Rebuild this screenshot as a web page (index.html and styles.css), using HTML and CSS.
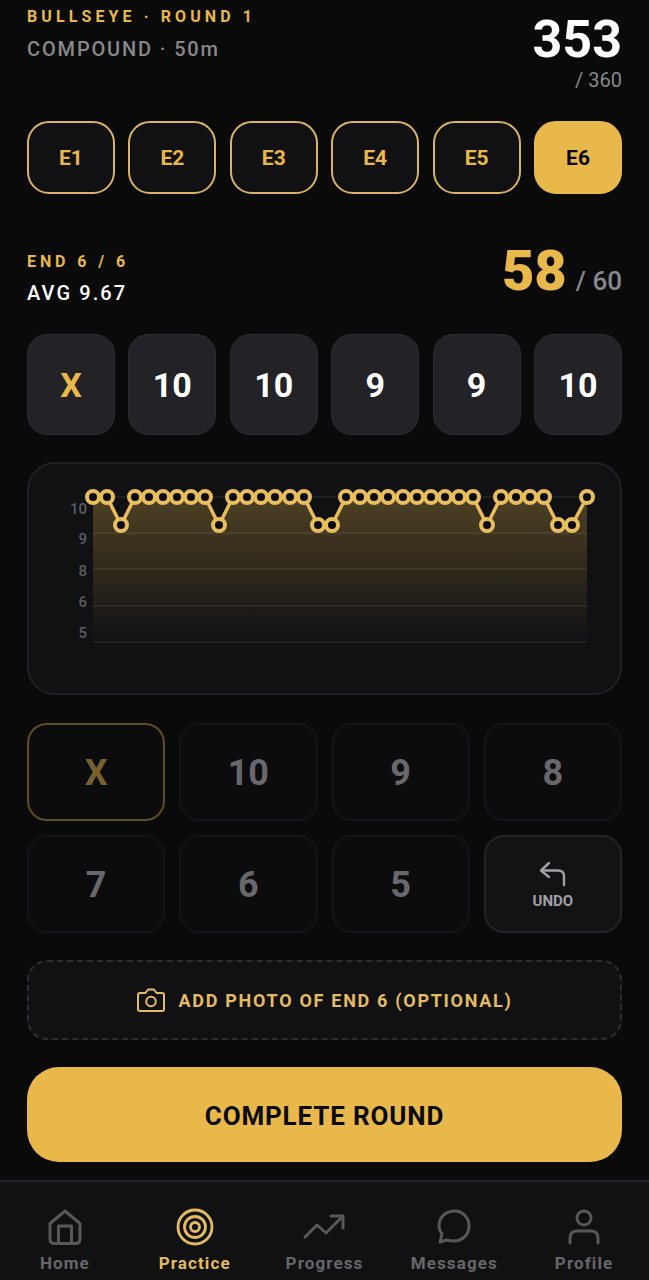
FILE: index.html
```html
<!DOCTYPE html>
<html lang="en">
<head>
  <meta charset="UTF-8">
  <meta name="viewport" content="width=device-width, initial-scale=1.0">
  <title>Bullseye - Round 1</title>
  <link rel="stylesheet" href="styles.css">
</head>
<body>
  <main class="content">
    <header class="round-header">
      <div>
        <div class="round-title">BULLSEYE · ROUND 1</div>
        <div class="round-sub">COMPOUND · 50m</div>
      </div>
      <div class="round-score">
        <div class="round-total">353</div>
        <div class="round-max">/ 360</div>
      </div>
    </header>

    <div class="six-grid end-tabs">
      <button class="end-tab">E1</button>
      <button class="end-tab">E2</button>
      <button class="end-tab">E3</button>
      <button class="end-tab">E4</button>
      <button class="end-tab">E5</button>
      <button class="end-tab active">E6</button>
    </div>

    <div class="end-summary">
      <div>
        <div class="end-label">END 6 / 6</div>
        <div class="end-avg">AVG 9.67</div>
      </div>
      <div class="end-score"><span class="end-total">58</span><span class="end-max">/ 60</span></div>
    </div>

    <div class="six-grid arrows">
      <div class="arrow-card gold">X</div>
      <div class="arrow-card">10</div>
      <div class="arrow-card">10</div>
      <div class="arrow-card">9</div>
      <div class="arrow-card">9</div>
      <div class="arrow-card">10</div>
    </div>

    <div class="chart-card">
      <svg class="chart" viewBox="27 462 595 233" width="595" height="233">
        <defs>
          <linearGradient id="areaFill" x1="0" y1="0" x2="0" y2="1">
            <stop offset="0" stop-color="#e8b84a" stop-opacity="0.28"/>
            <stop offset="1" stop-color="#e8b84a" stop-opacity="0"/>
          </linearGradient>
        </defs>
        <g class="grid-lines">
          <line x1="93" y1="497" x2="587" y2="497"/>
          <line x1="93" y1="533" x2="587" y2="533"/>
          <line x1="93" y1="569" x2="587" y2="569"/>
          <line x1="93" y1="606" x2="587" y2="606"/>
          <line x1="93" y1="642" x2="587" y2="642"/>
        </g>
        <g class="axis-labels">
          <text x="87" y="514">10</text>
          <text x="87" y="544">9</text>
          <text x="87" y="576">8</text>
          <text x="87" y="607">6</text>
          <text x="87" y="638">5</text>
        </g>
        <path fill="url(#areaFill)" d="M93 497H107L121 525L135 497H205L219 525L233 497H304L318 525H332L346 497H473L487 525L501 497H544L558 525H572L587 497V642H93Z"/>
        <path class="score-line" d="M93 497H107L121 525L135 497H205L219 525L233 497H304L318 525H332L346 497H473L487 525L501 497H544L558 525H572L587 497"/>
        <g class="score-dots">
          <circle cx="93" cy="497" r="6"/><circle cx="107" cy="497" r="6"/><circle cx="121" cy="525" r="6"/>
          <circle cx="135" cy="497" r="6"/><circle cx="149" cy="497" r="6"/><circle cx="163" cy="497" r="6"/>
          <circle cx="177" cy="497" r="6"/><circle cx="191" cy="497" r="6"/><circle cx="205" cy="497" r="6"/>
          <circle cx="219" cy="525" r="6"/><circle cx="233" cy="497" r="6"/><circle cx="247" cy="497" r="6"/>
          <circle cx="261" cy="497" r="6"/><circle cx="275" cy="497" r="6"/><circle cx="290" cy="497" r="6"/>
          <circle cx="304" cy="497" r="6"/><circle cx="318" cy="525" r="6"/><circle cx="332" cy="525" r="6"/>
          <circle cx="346" cy="497" r="6"/><circle cx="360" cy="497" r="6"/><circle cx="374" cy="497" r="6"/>
          <circle cx="388" cy="497" r="6"/><circle cx="403" cy="497" r="6"/><circle cx="417" cy="497" r="6"/>
          <circle cx="431" cy="497" r="6"/><circle cx="445" cy="497" r="6"/><circle cx="459" cy="497" r="6"/>
          <circle cx="473" cy="497" r="6"/><circle cx="487" cy="525" r="6"/><circle cx="501" cy="497" r="6"/>
          <circle cx="516" cy="497" r="6"/><circle cx="530" cy="497" r="6"/><circle cx="544" cy="497" r="6"/>
          <circle cx="558" cy="525" r="6"/><circle cx="572" cy="525" r="6"/><circle cx="587" cy="497" r="6"/>
        </g>
      </svg>
    </div>

    <div class="keypad">
      <button class="key key-x">X</button>
      <button class="key">10</button>
      <button class="key">9</button>
      <button class="key">8</button>
      <button class="key">7</button>
      <button class="key">6</button>
      <button class="key">5</button>
      <button class="key key-undo">
        <svg width="28" height="26" viewBox="0 0 28 26" fill="none" stroke="currentColor" stroke-width="2.4" stroke-linecap="round" stroke-linejoin="round">
          <path d="M10 2L2 9.5L10 16"/>
          <path d="M3 9.5H19Q25 9.5 25 15V24"/>
        </svg>
        <span>UNDO</span>
      </button>
    </div>

    <button class="photo-button">
      <svg width="28" height="24" viewBox="0 0 28 24" fill="none" stroke="currentColor" stroke-width="2" stroke-linejoin="round">
        <path d="M3 5H8.5L11 1.5H17L19.5 5H25Q27 5 27 7V21Q27 23 25 23H3Q1 23 1 21V7Q1 5 3 5Z"/>
        <circle cx="14" cy="13.5" r="4.8"/>
      </svg>
      <span>ADD PHOTO OF END 6 (OPTIONAL)</span>
    </button>

    <button class="complete-button">COMPLETE ROUND</button>
  </main>

  <nav class="bottom-nav">
    <a class="nav-item">
      <svg width="36" height="38" viewBox="0 0 36 38" fill="none" stroke="currentColor" stroke-width="3" stroke-linejoin="round">
        <path d="M3 15.5L18 3L33 15.5V31Q33 35.5 28.5 35.5H7.5Q3 35.5 3 31Z"/>
        <path d="M11.500 35V18H24.500V35"/>
      </svg>
      <span>Home</span>
    </a>
    <a class="nav-item active">
      <svg width="38" height="38" viewBox="0 0 38 38" fill="none" stroke="currentColor" stroke-width="2.8">
        <circle cx="19" cy="19" r="17"/>
        <circle cx="19" cy="19" r="10.5"/>
        <circle cx="19" cy="19" r="4.5"/>
      </svg>
      <span>Practice</span>
    </a>
    <a class="nav-item">
      <svg width="42" height="38" viewBox="0 0 42 38" fill="none" stroke="currentColor" stroke-width="3" stroke-linecap="round" stroke-linejoin="round">
        <path d="M2 29L14 17L23 25L39 9"/>
        <path d="M28 8H40V20"/>
      </svg>
      <span>Progress</span>
    </a>
    <a class="nav-item">
      <svg width="36" height="38" viewBox="0 0 36 38" fill="none" stroke="currentColor" stroke-width="3" stroke-linejoin="round">
        <path d="M4 34L6 26Q3 22 3 18C3 9 10 3 18.500 3C27 3 33 10 33 18C33 27 26 33 18 33Q14 33 11 32Z"/>
      </svg>
      <span>Messages</span>
    </a>
    <a class="nav-item">
      <svg width="32" height="38" viewBox="0 0 32 38" fill="none" stroke="currentColor" stroke-width="3" stroke-linecap="round">
        <circle cx="16" cy="10" r="7"/>
        <path d="M2 35V30Q2 23 9 23H23Q30 23 30 30V35"/>
      </svg>
      <span>Profile</span>
    </a>
  </nav>
</body>
</html>
```

FILE: styles.css
```css
* {
  box-sizing: border-box;
}
html, body {
  height: 100%;
}
body {
  font-family: 'Roboto', sans-serif;
  margin: 0;
  background-color: #0a0a0b;
  color: #fff;
  display: flex;
  flex-direction: column;
  overflow: hidden;
}
button {
  font-family: inherit;
  cursor: pointer;
}
.content {
  flex: 1;
  padding: 8px 27px 0;
}
.round-header {
  display: flex;
  justify-content: space-between;
  height: 113px;
}
.round-title {
  color: #e8b84a;
  font-size: 16px;
  font-weight: 700;
  letter-spacing: 4.1px;
  line-height: 18px;
}
.round-sub {
  color: #88888c;
  font-size: 20px;
  font-weight: 500;
  letter-spacing: 1.85px;
  line-height: 24px;
  margin-top: 11px;
}
.round-score {
  text-align: right;
}
.round-total {
  font-size: 52px;
  font-weight: 700;
  line-height: 50px;
  margin-top: 7px;
}
.round-max {
  color: #88888c;
  font-size: 20px;
  line-height: 24px;
  margin-top: 3px;
}
.six-grid {
  display: grid;
  grid-template-columns: repeat(6, 1fr);
  gap: 13.5px;
}
.end-tab {
  height: 73px;
  background-color: #111114;
  border: 2px solid #d9b366;
  border-radius: 22px;
  color: #e8b84a;
  font-size: 21px;
  font-weight: 700;
  padding: 0;
}
.end-tab.active {
  background-color: #e8b84a;
  border-color: #e8b84a;
  color: #0a0a0b;
}
.end-summary {
  display: flex;
  justify-content: space-between;
  align-items: flex-start;
  height: 84px;
  margin-top: 50px;
  margin-bottom: 6px;
}
.end-label {
  color: #e8b84a;
  font-size: 16px;
  font-weight: 700;
  letter-spacing: 3.9px;
  line-height: 20px;
  margin-top: 8px;
}
.end-avg {
  font-size: 20px;
  font-weight: 500;
  letter-spacing: 2.1px;
  line-height: 24px;
  margin-top: 9px;
}
.end-score {
  display: flex;
  align-items: baseline;
  gap: 9px;
  height: 60px;
  line-height: 55px;
}
.end-total {
  color: #e8b84a;
  font-size: 56px;
  font-weight: 900;
}
.end-max {
  color: #88888c;
  font-size: 26px;
  font-weight: 500;
}
.arrows {
  margin-bottom: 27px;
}
.arrow-card {
  display: flex;
  align-items: center;
  justify-content: center;
  height: 101px;
  background-color: #222227;
  border: 1px solid #2c2c32;
  border-radius: 20px;
  font-size: 34px;
  font-weight: 700;
}
.arrow-card.gold {
  color: #e8b84a;
}
.chart-card {
  height: 233px;
  background-color: #111114;
  border: 2px solid #212125;
  border-radius: 28px;
  overflow: hidden;
}
.chart {
  display: block;
  margin: -2px;
}
.grid-lines line {
  stroke: #fff;
  stroke-opacity: 0.09;
  stroke-width: 1.5;
}
.axis-labels text {
  fill: #5c5c62;
  font-size: 15px;
  font-weight: 500;
  text-anchor: end;
}
.score-line {
  fill: none;
  stroke: #e8be5c;
  stroke-width: 3.5;
}
.score-dots circle {
  fill: #0a0a0b;
  stroke: #e8be5c;
  stroke-width: 4;
}
.keypad {
  display: grid;
  grid-template-columns: repeat(4, 1fr);
  gap: 14px;
  margin-top: 28px;
}
.key {
  height: 98px;
  background-color: #0c0c0e;
  border: 2px solid #151518;
  border-radius: 20px;
  color: #68686c;
  font-size: 36px;
  font-weight: 700;
  padding: 2px 0 0;
}
.key-x {
  border-color: #5f4d26;
  color: #77622f;
}
.key-undo {
  display: flex;
  flex-direction: column;
  align-items: center;
  justify-content: center;
  gap: 6px;
  background-color: #131316;
  border-color: #242428;
  color: #a0a0a6;
}
.key-undo span {
  font-size: 15px;
  line-height: 16px;
}
.photo-button {
  display: flex;
  align-items: center;
  justify-content: center;
  gap: 14px;
  width: 100%;
  height: 80px;
  margin-top: 27px;
  background-color: #111114;
  border: 2px dashed #2e2e32;
  border-radius: 20px;
  color: #e3bb62;
  font-size: 18px;
  font-weight: 700;
  letter-spacing: 1.7px;
}
.complete-button {
  display: block;
  width: 100%;
  height: 95px;
  margin-top: 27px;
  padding: 2px 0 0;
  background-color: #e8b84a;
  border: none;
  border-radius: 32px;
  color: #0a0a0b;
  font-size: 26px;
  font-weight: 700;
  letter-spacing: 0.85px;
}
.bottom-nav {
  display: grid;
  grid-template-columns: repeat(5, 1fr);
  height: 100px;
  background-color: #111114;
  border-top: 2px solid #222226;
}
.nav-item {
  display: flex;
  flex-direction: column;
  align-items: center;
  padding-top: 26px;
  color: #58585c;
  font-size: 17px;
  font-weight: 700;
  letter-spacing: 1.1px;
}
.nav-item span {
  margin-top: 7px;
  color: #66666b;
  line-height: 20px;
}
.nav-item.active, .nav-item.active span {
  color: #e3bb62;
}
```
